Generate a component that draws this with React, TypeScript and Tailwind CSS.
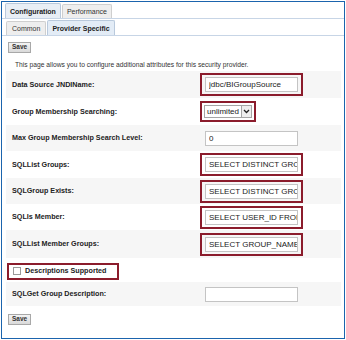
export default function App() {
  const rows: { label: string; kind: string; value?: string; hl?: boolean; h: string }[] = [
    { label: "Data Source JNDIName:", kind: "input", value: "jdbc/BIGroupSource", hl: true, h: "h-[27px]" },
    { label: "Group Membership Searching:", kind: "select", value: "unlimited", hl: true, h: "h-[27px]" },
    { label: "Max Group Membership Search Level:", kind: "input", value: "0", h: "h-[26px]" },
    { label: "SQLList Groups:", kind: "input", value: "SELECT DISTINCT GROUP_NAME", hl: true, h: "h-[27px]" },
    { label: "SQLGroup Exists:", kind: "input", value: "SELECT DISTINCT GROUP_NAME", hl: true, h: "h-[26px]" },
    { label: "SQLIs Member:", kind: "input", value: "SELECT USER_ID FROM", hl: true, h: "h-[26px]" },
    { label: "SQLList Member Groups:", kind: "input", value: "SELECT GROUP_NAME FROM", hl: true, h: "h-[28px]" },
    { label: "Descriptions Supported", kind: "check", hl: true, h: "h-[24px]" },
    { label: "SQLGet Group Description:", kind: "input", value: "", h: "h-[24px]" },
  ];

  const saveBtn = (
    <button
      type="button"
      className="flex h-[11px] items-center border border-[#a8a8a8] bg-gradient-to-b from-[#f4f4f4] to-[#d9d9d9] px-[3px] text-[6.5px] font-bold leading-none text-[#333]"
    >
      Save
    </button>
  );

  return (
    <div className="h-[340px] w-[346px] bg-white p-[1px] font-['Liberation_Sans',Arial,sans-serif]">
      <div className="flex h-[338px] w-[344px] flex-col border border-[#1b64ad] bg-white">
        {/* top tabs */}
        <div className="flex h-[17px] shrink-0 items-end gap-[1px] border-b border-[#c7d5e6] px-[3px]">
          <div className="flex h-[15px] items-center rounded-t-[2px] border border-b-0 border-[#b9c9dc] bg-[#e8eef5] px-[4px] text-[7px] font-bold leading-none text-[#222]">
            Configuration
          </div>
          <div className="flex h-[14px] items-center rounded-t-[2px] border border-b-0 border-[#cfcfcf] bg-[#eeeeee] px-[4px] text-[7px] leading-none text-[#333]">
            Performance
          </div>
        </div>
        {/* sub tabs */}
        <div className="flex h-[17px] shrink-0 items-end gap-[1px] border-b border-[#c7d5e6] px-[4px]">
          <div className="flex h-[14px] items-center rounded-t-[2px] border border-b-0 border-[#cfcfcf] bg-[#eeeeee] px-[5px] text-[7px] leading-none text-[#333]">
            Common
          </div>
          <div className="flex h-[15px] items-center rounded-t-[2px] border border-b-0 border-[#b9c9dc] bg-[#e3ecf6] px-[4px] text-[7px] font-bold leading-none text-[#222]">
            Provider Specific
          </div>
        </div>

        <div className="flex px-[6px] pt-[6px]">{saveBtn}</div>
        <div className="whitespace-nowrap pl-[13px] pt-[7px] text-[6.7px] leading-[10px] text-[#333]">
          This page allows you to configure additional attributes for this security provider.
        </div>

        <div className="mr-[3px] ml-[4px] mt-[1px] flex flex-col">
          {rows.map((r, i) => (
            <div
              key={r.label}
              className={"flex items-center " + (i % 2 === 0 ? "bg-[#f6f6f6] " : "bg-white ") + r.h}
            >
              {r.kind === "check" ? (
                <div className="ml-[1px] mt-[2px] flex h-[17px] w-[112px] items-center gap-[4px] border-2 border-[#8b1c2c] pl-[4px]">
                  <span className="h-[8px] w-[8px] border border-[#9a9a9a] bg-white" />
                  <span className="text-[7.2px] font-bold leading-none text-[#222]">{r.label}</span>
                </div>
              ) : (
                <>
                  <div className="w-[194px] pl-[6px] text-[7.2px] font-bold leading-none text-[#222]">{r.label}</div>
                  {r.kind === "select" ? (
                    <div className="flex h-[21px] items-center border-2 border-[#8b1c2c] px-[2px]">
                      <div className="flex h-[13px] items-center border border-[#a5a5a5] bg-white pl-[2px] text-[8px] leading-none text-[#222]">
                        unlimited
                        <span className="ml-[2px] flex h-[11px] w-[10px] items-center justify-center border-l border-[#a5a5a5] bg-[#eeeeee]">
                          <svg width="7" height="5" viewBox="0 0 7 5">
                            <path d="M1 1 L3.5 3.5 L6 1" stroke="#222" strokeWidth="1.3" fill="none" />
                          </svg>
                        </span>
                      </div>
                    </div>
                  ) : (
                    <div
                      className={
                        "flex items-center " +
                        (r.hl ? "h-[23px] border-2 border-[#8b1c2c] px-[3px]" : "px-[5px]")
                      }
                    >
                      <input
                        readOnly
                        value={r.value}
                        className="h-[15px] w-[93px] border border-[#c4c4c4] bg-white pl-[3px] text-[8px] text-[#222] outline-none"
                      />
                    </div>
                  )}
                </>
              )}
            </div>
          ))}
        </div>

        <div className="flex px-[6px] pt-[8px]">{saveBtn}</div>
      </div>
    </div>
  );
}
